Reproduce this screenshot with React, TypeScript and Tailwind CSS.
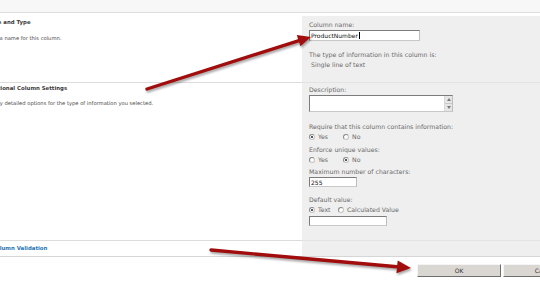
import React from 'react'

const Radio = ({ checked }: { checked?: boolean }) => (
  <span className="flex h-[6px] w-[6px] shrink-0 items-center justify-center rounded-full border border-[#8a8a8a] border-b-[#c4c4c4] border-r-[#c4c4c4] bg-white">
    {checked && <span className="h-[2px] w-[2px] rounded-full bg-[#1e1e1e]" />}
  </span>
)

const Field = ({ className, children }: { className: string; children?: React.ReactNode }) => (
  <div className={`flex items-center border border-[#7c7c7c] border-b-[#c8c8c8] border-r-[#bdbdbd] bg-white pl-[1px] text-[6px] leading-[7px] text-[#111] ${className}`}>
    {children}
  </div>
)

const Arrows = () => (
  <svg
    className="pointer-events-none absolute left-0 top-0 drop-shadow-[1px_2px_1px_rgba(0,0,0,0.35)]"
    width="540"
    height="304"
    viewBox="0 0 540 304"
  >
    <line x1="147" y1="89" x2="299" y2="40.6" stroke="#a10d0d" strokeWidth="3.4" strokeLinecap="round" />
    <polygon points="311,37 300.4,46.2 296.8,35" fill="#a10d0d" />
    <line x1="211" y1="250" x2="397" y2="266.8" stroke="#a10d0d" strokeWidth="3.4" strokeLinecap="round" />
    <polygon points="411,268 396.4,273.2 397.7,260.5" fill="#a10d0d" />
  </svg>
)

const App = () => {
  return (
    <div className="relative h-[304px] w-[540px] overflow-hidden bg-white font-['DejaVu_Sans',sans-serif]">
      <div className="w-[600px]">
        <div className="h-[13px] border-b border-[#dedede] bg-[#f7f7f7]" />
        <div className="h-[3px]" />

        {/* name and type */}
        <div className="flex h-[67px]">
          <div className="w-[302px] overflow-hidden border-b border-[#dcdcdc]">
            <div className="-ml-[16px] flex flex-col pt-[3px]">
              <span className="whitespace-nowrap text-[5.4px] font-bold leading-[7px] text-[#3b3b3b]">Name and Type</span>
              <span className="mt-[9px] whitespace-nowrap text-[5.2px] leading-[7px] text-[#4a4a4a]">Enter a name for this column.</span>
            </div>
          </div>
          <div className="flex flex-1 flex-col border-b border-[#e3e3e3] bg-[#efefef] pl-[7px] pt-[5px] text-[6.2px] leading-[7px] text-[#6a6a6a]">
            <span>Column name:</span>
            <Field className="mt-[2px] h-[11px] w-[111px]">
              ProductNumber<span className="ml-[1px] h-[7px] w-[1px] bg-black" />
            </Field>
            <span className="mt-[10px]">The type of information in this column is:</span>
            <span className="mt-[3px] pl-[2px]">Single line of text</span>
          </div>
        </div>

        {/* additional settings */}
        <div className="flex h-[158px]">
          <div className="w-[302px] overflow-hidden border-b border-[#dcdcdc]">
            <div className="-ml-[16px] flex flex-col pt-[2px]">
              <span className="whitespace-nowrap text-[5.4px] font-bold leading-[7px] text-[#3b3b3b]">Additional Column Settings</span>
              <span className="mt-[8px] whitespace-nowrap text-[5.2px] leading-[7px] text-[#4a4a4a]">Specify detailed options for the type of information you selected.</span>
            </div>
          </div>
          <div className="flex flex-1 flex-col border-b border-[#e3e3e3] bg-[#efefef] pl-[7px] pt-[3px] text-[6.2px] leading-[7px] text-[#6a6a6a]">
            <span>Description:</span>
            <div className="mt-[2px] flex h-[17px] w-[144px] justify-end border border-[#7c7c7c] border-b-[#c8c8c8] border-r-[#bdbdbd] bg-white">
              <div className="flex w-[8px] flex-col border-l border-[#d8d8d8] bg-[#f2f2f2]">
                <div className="flex h-1/2 items-center justify-center border-b border-[#c8c8c8] bg-[#e6e6e6]">
                  <svg width="4" height="3" viewBox="0 0 4 3"><polygon points="2,0 4,3 0,3" fill="#7a7a7a" /></svg>
                </div>
                <div className="flex h-1/2 items-center justify-center bg-[#e6e6e6]">
                  <svg width="4" height="3" viewBox="0 0 4 3"><polygon points="0,0 4,0 2,3" fill="#7a7a7a" /></svg>
                </div>
              </div>
            </div>
            <span className="mt-[11px]">Require that this column contains information:</span>
            <div className="mt-[3px] flex items-center">
              <Radio checked />
              <span className="ml-[3px] w-[25px]">Yes</span>
              <Radio />
              <span className="ml-[3px]">No</span>
            </div>
            <span className="mt-[6px]">Enforce unique values:</span>
            <div className="mt-[3px] flex items-center">
              <Radio />
              <span className="ml-[3px] w-[25px]">Yes</span>
              <Radio checked />
              <span className="ml-[3px]">No</span>
            </div>
            <span className="mt-[5px]">Maximum number of characters:</span>
            <Field className="mt-[2px] h-[10px] w-[48px]">255</Field>
            <span className="mt-[9px]">Default value:</span>
            <div className="mt-[3px] flex items-center">
              <Radio checked />
              <span className="ml-[3px] w-[20px]">Text</span>
              <Radio />
              <span className="ml-[3px]">Calculated Value</span>
            </div>
            <Field className="mt-[3px] h-[10px] w-[78px]" />
          </div>
        </div>

        {/* validation */}
        <div className="flex h-[16px]">
          <div className="w-[302px] overflow-hidden border-b border-[#d6d6d6]">
            <div className="-ml-[8px] flex pt-[4px]">
              <span className="whitespace-nowrap text-[5.4px] font-bold leading-[7px] text-[#1f74b4]">Column Validation</span>
            </div>
          </div>
          <div className="flex-1 border-b border-[#d6d6d6] bg-[#efefef]" />
        </div>

        <div className="mt-[7px] flex justify-end gap-[2px] pr-[13px]">
          <button className="h-[13px] w-[84px] border border-[#f4f4f4] border-b-[#6e6e6e] border-r-[#6e6e6e] bg-[#dad7d2] text-[6px] leading-[7px] text-[#333]">OK</button>
          <button className="h-[13px] w-[84px] border border-[#f4f4f4] border-b-[#6e6e6e] border-r-[#6e6e6e] bg-[#dad7d2] text-[6px] leading-[7px] text-[#333]">Cancel</button>
        </div>
      </div>
      <Arrows />
    </div>
  )
}

export default App
